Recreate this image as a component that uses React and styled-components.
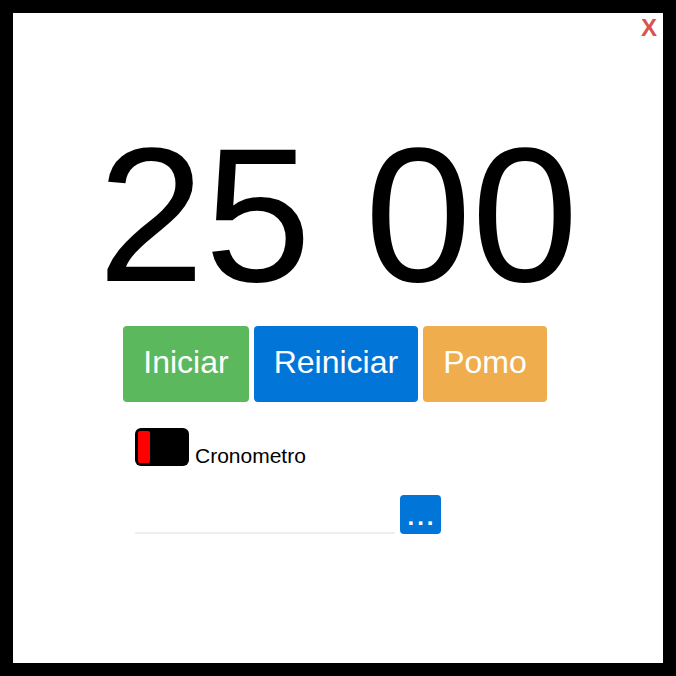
import styled, { createGlobalStyle } from 'styled-components';

const GlobalStyle = createGlobalStyle`
    html, body {
        margin: 0;
        padding: 0;
        background: #000;
    }
    body {
        padding: 13px;
        font-family: "Liberation Sans", Arial, sans-serif;
    }
`;

const Panel = styled.div`
    position: relative;
    width: 650px;
    height: 650px;
    background: #fff;
    display: flex;
    flex-direction: column;
    align-items: center;
    box-sizing: border-box;
    padding-top: 106px;
`;

const CloseButton = styled.span`
    position: absolute;
    top: 0;
    right: 6px;
    font-size: 24px;
    font-weight: bold;
    line-height: 30px;
    color: #d9534f;
    cursor: pointer;
`;

const Timer = styled.div`
    font-size: 192px;
    line-height: 192px;
    color: #000;
    white-space: pre;
`;

const Controls = styled.div`
    display: flex;
    gap: 5px;
    margin-top: 15px;
    padding-right: 6px;
`;

const ActionButton = styled.button`
    border: none;
    border-radius: 4px;
    padding: 18px 20px 22px;
    font-family: inherit;
    font-size: 32px;
    line-height: 36px;
    color: #fff;
    background: ${p => p.$color};
    cursor: pointer;
`;

const Options = styled.div`
    align-self: flex-start;
    margin-left: 122px;
    display: flex;
    flex-direction: column;
    gap: 29px;
    margin-top: 26px;
`;

const ToggleRow = styled.label`
    display: flex;
    align-items: flex-end;
    gap: 6px;
    font-size: 21px;
    line-height: 21px;
    color: #000;
`;

const Toggle = styled.span`
    display: block;
    width: 54px;
    height: 38px;
    box-sizing: border-box;
    background: #000;
    border-radius: 6px;
    padding: 3px;
`;

const Knob = styled.span`
    display: block;
    width: 12px;
    height: 100%;
    background: #f00;
    border-radius: 2px;
`;

const InputRow = styled.div`
    display: flex;
    align-items: flex-end;
    gap: 5px;
`;

const TextInput = styled.input`
    width: 260px;
    height: 30px;
    box-sizing: border-box;
    border: none;
    border-bottom: 2px solid #eee;
    outline: none;
    background: transparent;
    font-family: inherit;
    font-size: 18px;
`;

const MoreButton = styled.button`
    width: 41px;
    height: 39px;
    border: none;
    border-radius: 4px;
    background: #0275d8;
    color: #fff;
    display: flex;
    align-items: flex-end;
    justify-content: center;
    padding: 0 0 5px 3px;
    font-family: inherit;
    font-size: 24px;
    font-weight: bold;
    line-height: 24px;
    letter-spacing: 3px;
    cursor: pointer;
`;

const buttons = [
    { label: 'Iniciar', color: '#5cb85c' },
    { label: 'Reiniciar', color: '#0275d8' },
    { label: 'Pomo', color: '#f0ad4e' },
];

const App = () => {
    return (
        <>
            <GlobalStyle />
            <Panel>
                <CloseButton>X</CloseButton>
                <Timer>25 00</Timer>
                <Controls>
                    {buttons.map(b => (
                        <ActionButton key={b.label} $color={b.color}>{b.label}</ActionButton>
                    ))}
                </Controls>
                <Options>
                    <ToggleRow>
                        <Toggle><Knob /></Toggle>
                        Cronometro
                    </ToggleRow>
                    <InputRow>
                        <TextInput type="text" />
                        <MoreButton>...</MoreButton>
                    </InputRow>
                </Options>
            </Panel>
        </>
    );
};

export default App;
